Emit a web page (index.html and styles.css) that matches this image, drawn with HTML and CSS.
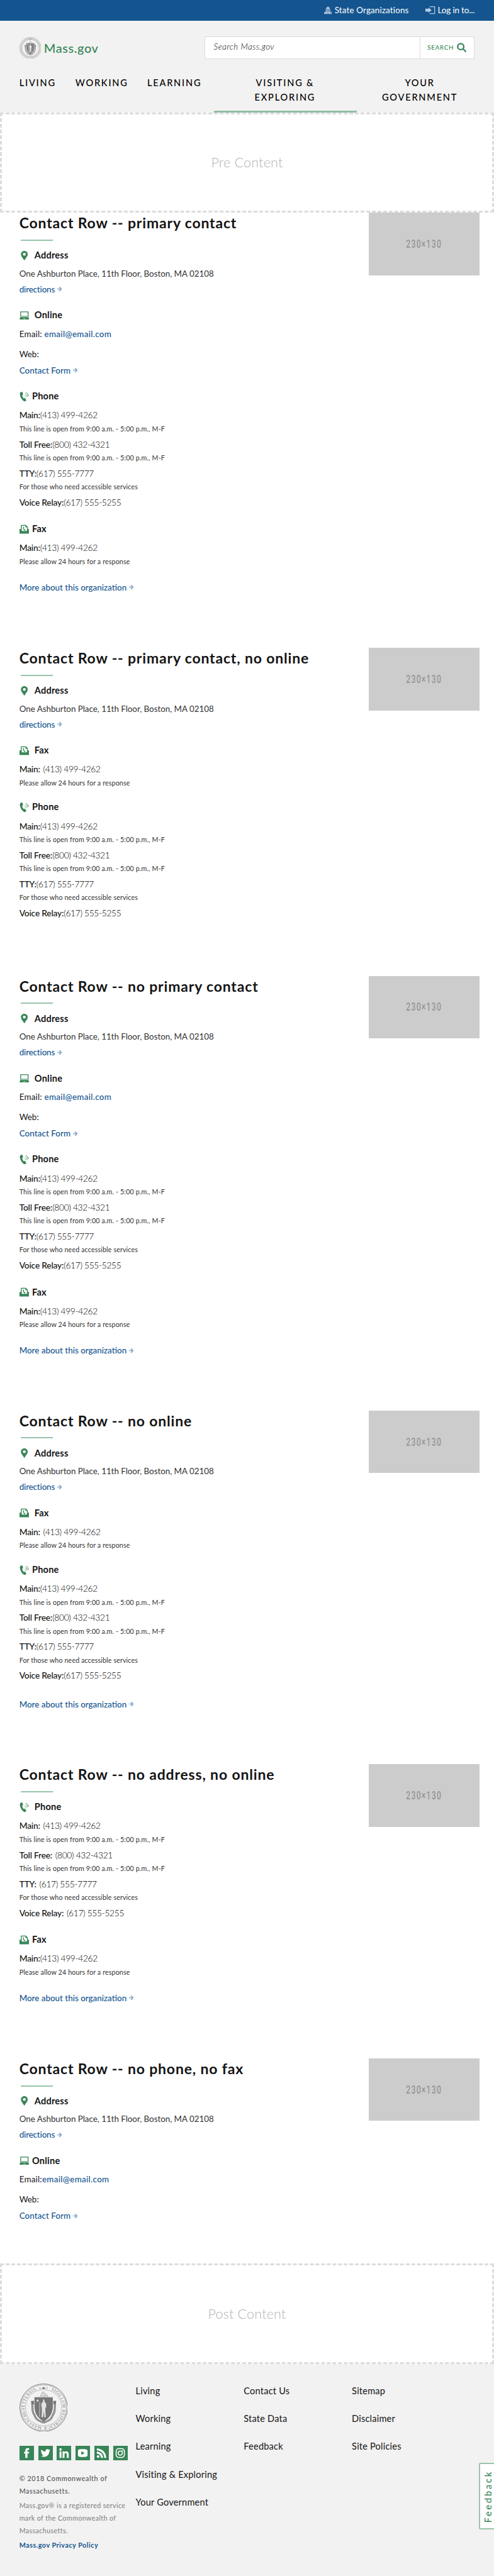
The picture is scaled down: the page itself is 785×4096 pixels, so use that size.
FILE: index.html
```html
<!DOCTYPE html>
<html lang="en">
<head>
<meta charset="utf-8">
<title>Mass.gov - Contact Rows</title>
<link rel="stylesheet" href="styles.css">
</head>
<body>
<svg class="sprite" aria-hidden="true">
  <symbol id="pin" viewBox="0 0 20 20"><path fill-rule="evenodd" d="M10 0C6 0 3 3 3 7c0 4 3.600 7.500 7 13 3.400-5.500 7-9 7-13 0-4-3-7-7-7zm0 3.900a3 3 0 1 1 0 6 3 3 0 0 1 0-6z"/></symbol>
  <symbol id="laptop" viewBox="0 0 20 20"><path fill-rule="evenodd" d="M1.500 1.600h17.200v10.900H1.500zM3.200 3.200v7.800h13.800V3.200z"/><path fill-rule="evenodd" d="M1.400 13.300h17.200l1.400 5H0zM8.400 16.300l-.4 1.100h4l-.4-1.100z"/></symbol>
  <symbol id="phone" viewBox="0 0 20 20"><path d="M2.700.7 5.600 0l2 5.200-2 1.500c.2 2.700 1.500 5.100 3.300 7l2.300-.9 3 4.600-1.900 2.300c-1.200.6-2.400.2-3.500-.5C4.700 16.300 1.400 11.200.8 5.200.7 3.300 1 1.500 2.700.7z"/><path class="wave" d="M11.100 8.800c1.300.1 2 .8 2.300 2M12.100 5.300c2.300.5 3.700 2.100 4 4.700M13.100 1.800c3.300 1.200 5.200 3.700 5.400 7.400"/></symbol>
  <symbol id="fax" viewBox="0 0 20 20"><path fill-rule="evenodd" d="M0 9.300h2.800V1h10.500l3.900 4v4.300H20V19H0zM4.600 2.700v10.700h10.800V6h-3.100V2.700z"/><path d="M7.600 4.800 9 4.400l.7 2.400-.8.800c.1 1 .6 1.800 1.300 2.500l1-.3 1.200 1.800-1 1C8.600 12.100 6.600 8.500 7.600 4.800z"/></symbol>
  <symbol id="arrow" viewBox="0 0 10 12"><path d="M0 5h5.700L3.300 2.600 5 .9 10 6l-5 5.100-1.700-1.700L5.700 7H0z"/></symbol>
  <symbol id="seal" viewBox="0 0 100 100">
    <circle class="seal-line" cx="50" cy="50" r="49.300" stroke-width="1.300"/>
    <circle class="seal-line" cx="50" cy="50" r="47" stroke-width=".6"/>
    <circle class="seal-line" cx="50" cy="50" r="37.500" stroke-width="1.100" stroke-dasharray=".8 .7"/>
    <path d="M41 8.500l5 1.200 4-3 4 3 5-1.200-2-1v3l-3-1-4 2.300-4-2.300-5 1z"/>
    <path class="seal-line" stroke-width="1" d="M43 27c2-4 4-8 6-10l3 3 5 4 2 3M45 26h12M48 20l5 5"/>
    <path class="ribbon" d="M26 38c2 8-1 16 3 24 3 3 2 7 7 12 5 5 9 5 14 7 5-2 9-2 14-7 5-5 4-9 7-12 4-8 1-16 3-24"/>
    <path class="ribbon-gap" d="M26 38c2 8-1 16 3 24 3 3 2 7 7 12 5 5 9 5 14 7 5-2 9-2 14-7 5-5 4-9 7-12 4-8 1-16 3-24"/>
    <path d="M24 36h6v7h-5zM70 36h6l-1 7h-5z"/>
    <path d="M31 28.500h38V48c0 15-8 24-19 31-11-7-19-16-19-31z"/>
    <path class="figure" d="M37.500 32l.9 2.200 2.300.1-1.800 1.500.6 2.300-2-1.300-2 1.300.6-2.300-1.800-1.500 2.300-.1zM49 32.500l2.500 1.500.5 4 3 3 .5 8-2 1.500v6l1 13-3 1-1-13-2 13-3-1 1-13-.5-8-1-5 2-4 1.500-2zM41.500 38.500l1 .2L42 69h-1z"/>
  </symbol>
</svg>

<header class="header">
  <div class="topbar">
    <a class="toplink"><svg class="topicon topicon--house" viewBox="0 0 16 16"><path d="M7.500 0h1v1.200C10.800 1.700 12 3.500 12 5.500H4c0-2 1.200-3.800 3.500-4.300zM3 6.200h10v1.300H3zM3.500 8h1.700v3H3.500zM6 8h1.600v3H6zM8.400 8H10v3H8.400zM10.800 8h1.700v3h-1.700zM.8 11.400h14.400V13H.8zM0 13h2v2H0zM3 13h2v2H3zM5.800 13h1.600v2H5.800zM8.600 13h1.600v2H8.600zM11 13h2v2h-2zM14 13h2v2h-2zM0 14.800h16V16H0z"/></svg>State Organizations</a>
    <a class="toplink toplink--login"><svg class="topicon topicon--login" viewBox="0 0 20 16"><path d="M0 5h6.500V2.600L13 8l-6.500 5.400V11H0zM9 0h11v16H9v-1.700h9.400V1.700H9z"/></svg>Log in to...</a>
  </div>
  <div class="brandbar">
    <a class="brand"><svg class="brand__seal" viewBox="0 0 100 100"><circle class="seal-dots" cx="50" cy="50" r="42.300"/><use href="#seal" width="100" height="100"/></svg><span>Mass.gov</span></a>
    <div class="search">
      <div class="search__field">Search Mass.gov</div>
      <div class="search__button"><span>SEARCH</span><svg viewBox="0 0 20 20"><circle cx="8" cy="8" r="6.300" fill="none" stroke="currentColor" stroke-width="3"/><path d="M12 13.800l1.900-1.900 6 5.700-2.200 2.300z"/></svg></div>
    </div>
  </div>
  <nav class="nav">
    <a>LIVING</a><a>WORKING</a><a>LEARNING</a><a class="nav__wide nav__wide--active">VISITING &amp;<br>EXPLORING</a><a class="nav__wide">YOUR<br>GOVERNMENT</a>
  </nav>
</header>

<div class="slot"><span>Pre Content</span></div>

<main>
<section class="row row--1">
  <div class="contact">
    <h2>Contact Row -- primary contact</h2>
    <h3><svg><use href="#pin"/></svg>Address</h3>
    <p class="address">One Ashburton Place, 11th Floor, Boston, MA 02108</p>
    <a class="link link--near">directions<svg><use href="#arrow"/></svg></a>
    <h3><svg><use href="#laptop"/></svg>Online</h3>
    <p class="online"><span>Email:</span> <a>email@email.com</a></p>
    <p class="web">Web:</p>
    <a class="link">Contact Form<svg><use href="#arrow"/></svg></a>
    <h3 class="tight"><svg><use href="#phone"/></svg>Phone</h3>
    <p class="line"><b>Main:</b><span>(413) 499-4262</span></p>
    <p class="note">This line is open from 9:00 a.m. - 5:00 p.m., M-F</p>
    <p class="line"><b>Toll Free:</b><span>(800) 432-4321</span></p>
    <p class="note">This line is open from 9:00 a.m. - 5:00 p.m., M-F</p>
    <p class="line"><b>TTY:</b><span>(617) 555-7777</span></p>
    <p class="note">For those who need accessible services</p>
    <p class="line"><b>Voice Relay:</b><span>(617) 555-5255</span></p>
    <h3 class="tight"><svg><use href="#fax"/></svg>Fax</h3>
    <p class="line"><b>Main:</b><span>(413) 499-4262</span></p>
    <p class="note">Please allow 24 hours for a response</p>
    <a class="link link--more">More about this organization<svg><use href="#arrow"/></svg></a>
  </div>
  <div class="thumb"><span>230×130</span></div>
</section>

<section class="row row--2">
  <div class="contact">
    <h2>Contact Row -- primary contact, no online</h2>
    <h3><svg><use href="#pin"/></svg>Address</h3>
    <p class="address">One Ashburton Place, 11th Floor, Boston, MA 02108</p>
    <a class="link link--near">directions<svg><use href="#arrow"/></svg></a>
    <h3><svg><use href="#fax"/></svg>Fax</h3>
    <p class="line line--gap"><b>Main:</b> <span>(413) 499-4262</span></p>
    <p class="note">Please allow 24 hours for a response</p>
    <h3 class="tight"><svg><use href="#phone"/></svg>Phone</h3>
    <p class="line"><b>Main:</b><span>(413) 499-4262</span></p>
    <p class="note">This line is open from 9:00 a.m. - 5:00 p.m., M-F</p>
    <p class="line"><b>Toll Free:</b><span>(800) 432-4321</span></p>
    <p class="note">This line is open from 9:00 a.m. - 5:00 p.m., M-F</p>
    <p class="line"><b>TTY:</b><span>(617) 555-7777</span></p>
    <p class="note">For those who need accessible services</p>
    <p class="line"><b>Voice Relay:</b><span>(617) 555-5255</span></p>
  </div>
  <div class="thumb"><span>230×130</span></div>
</section>

<section class="row row--3">
  <div class="contact">
    <h2>Contact Row -- no primary contact</h2>
    <h3><svg><use href="#pin"/></svg>Address</h3>
    <p class="address">One Ashburton Place, 11th Floor, Boston, MA 02108</p>
    <a class="link link--near">directions<svg><use href="#arrow"/></svg></a>
    <h3><svg><use href="#laptop"/></svg>Online</h3>
    <p class="online"><span>Email:</span> <a>email@email.com</a></p>
    <p class="web">Web:</p>
    <a class="link">Contact Form<svg><use href="#arrow"/></svg></a>
    <h3 class="tight"><svg><use href="#phone"/></svg>Phone</h3>
    <p class="line"><b>Main:</b><span>(413) 499-4262</span></p>
    <p class="note">This line is open from 9:00 a.m. - 5:00 p.m., M-F</p>
    <p class="line"><b>Toll Free:</b><span>(800) 432-4321</span></p>
    <p class="note">This line is open from 9:00 a.m. - 5:00 p.m., M-F</p>
    <p class="line"><b>TTY:</b><span>(617) 555-7777</span></p>
    <p class="note">For those who need accessible services</p>
    <p class="line"><b>Voice Relay:</b><span>(617) 555-5255</span></p>
    <h3 class="tight"><svg><use href="#fax"/></svg>Fax</h3>
    <p class="line"><b>Main:</b><span>(413) 499-4262</span></p>
    <p class="note">Please allow 24 hours for a response</p>
    <a class="link link--more">More about this organization<svg><use href="#arrow"/></svg></a>
  </div>
  <div class="thumb"><span>230×130</span></div>
</section>

<section class="row row--4">
  <div class="contact">
    <h2>Contact Row -- no online</h2>
    <h3><svg><use href="#pin"/></svg>Address</h3>
    <p class="address">One Ashburton Place, 11th Floor, Boston, MA 02108</p>
    <a class="link link--near">directions<svg><use href="#arrow"/></svg></a>
    <h3><svg><use href="#fax"/></svg>Fax</h3>
    <p class="line line--gap"><b>Main:</b> <span>(413) 499-4262</span></p>
    <p class="note">Please allow 24 hours for a response</p>
    <h3 class="tight"><svg><use href="#phone"/></svg>Phone</h3>
    <p class="line"><b>Main:</b><span>(413) 499-4262</span></p>
    <p class="note">This line is open from 9:00 a.m. - 5:00 p.m., M-F</p>
    <p class="line"><b>Toll Free:</b><span>(800) 432-4321</span></p>
    <p class="note">This line is open from 9:00 a.m. - 5:00 p.m., M-F</p>
    <p class="line"><b>TTY:</b><span>(617) 555-7777</span></p>
    <p class="note">For those who need accessible services</p>
    <p class="line"><b>Voice Relay:</b><span>(617) 555-5255</span></p>
    <a class="link link--far">More about this organization<svg><use href="#arrow"/></svg></a>
  </div>
  <div class="thumb"><span>230×130</span></div>
</section>

<section class="row row--5">
  <div class="contact">
    <h2>Contact Row -- no address, no online</h2>
    <h3><svg><use href="#phone"/></svg>Phone</h3>
    <p class="line line--gap"><b>Main:</b> <span>(413) 499-4262</span></p>
    <p class="note">This line is open from 9:00 a.m. - 5:00 p.m., M-F</p>
    <p class="line line--gap"><b>Toll Free:</b> <span>(800) 432-4321</span></p>
    <p class="note">This line is open from 9:00 a.m. - 5:00 p.m., M-F</p>
    <p class="line line--gap"><b>TTY:</b> <span>(617) 555-7777</span></p>
    <p class="note">For those who need accessible services</p>
    <p class="line line--gap"><b>Voice Relay:</b> <span>(617) 555-5255</span></p>
    <h3 class="tight"><svg><use href="#fax"/></svg>Fax</h3>
    <p class="line"><b>Main:</b><span>(413) 499-4262</span></p>
    <p class="note">Please allow 24 hours for a response</p>
    <a class="link link--more">More about this organization<svg><use href="#arrow"/></svg></a>
  </div>
  <div class="thumb"><span>230×130</span></div>
</section>

<section class="row row--6">
  <div class="contact">
    <h2>Contact Row -- no phone, no fax</h2>
    <h3><svg><use href="#pin"/></svg>Address</h3>
    <p class="address">One Ashburton Place, 11th Floor, Boston, MA 02108</p>
    <a class="link link--near">directions<svg><use href="#arrow"/></svg></a>
    <h3 class="tight"><svg><use href="#laptop"/></svg>Online</h3>
    <p class="online"><span>Email:</span><a>email@email.com</a></p>
    <p class="web">Web:</p>
    <a class="link">Contact Form<svg><use href="#arrow"/></svg></a>
  </div>
  <div class="thumb"><span>230×130</span></div>
</section>
</main>

<div class="slot"><span>Post Content</span></div>

<footer class="footer">
  <div class="about">
    <svg class="about__seal" viewBox="0 0 100 100"><use href="#seal" width="100" height="100"/><path id="ring" fill="none" d="M50 10.500a39.500 39.500 0 1 1-.01 0"/><text class="seal-text"><textPath href="#ring" startOffset="16" textLength="218">SIGILLUM REIPUBLICÆ MASSACHUSETTENSIS.</textPath></text></svg>
    <div class="social">
      <svg viewBox="0 0 30 30"><path d="M12 25v-9H9.500v-3.600H12V10c0-3.300 1.600-5 4.800-5H20v3.500h-1.900c-1.200 0-1.600.6-1.600 1.700v2.200H20l-.5 3.600h-3v9z"/></svg>
      <svg viewBox="0 0 30 30"><path d="M5 21.300c2.300.2 4.200-.4 5.800-1.600-1.900-.1-3.200-1.200-3.700-2.800h1.700C6.700 16.300 5.600 14.800 5.600 12.700c.6.300 1.100.5 1.700.5C5.500 11.800 5 9.700 6.200 7.700c2.300 2.700 5 4.100 8.400 4.300C14 9.300 15.800 7 18.600 7c1.200 0 2.200.5 3 1.300.9-.2 1.800-.5 2.600-1-.3.900-.9 1.700-1.700 2.200l2.300-.6c-.5.800-1.200 1.500-2 2.100.2 6-4.300 11.800-11.300 11.900-2.400 0-4.600-.6-6.500-1.600z"/></svg>
      <svg viewBox="0 0 30 30"><circle cx="8" cy="7.500" r="2.500"/><path d="M6 11.500h4V25H6zM12.300 11.500h3.800v1.900c2-3.300 8.900-3 8.900 3.400V25h-4v-7.300c0-3.900-4.700-3.600-4.700 0V25h-4z"/></svg>
      <svg viewBox="0 0 30 30"><path fill-rule="evenodd" d="M9 7.200c4-.5 8-.5 12 0 2.600.2 4 1.500 4 4v7.600c0 2.500-1.400 3.800-4 4-4 .5-8 .5-12 0-2.600-.2-4-1.500-4-4v-7.600c0-2.500 1.400-3.800 4-4zM12 11v8l7-4z"/></svg>
      <svg viewBox="0 0 30 30"><circle cx="7.700" cy="22.300" r="2.700"/><path d="M5 5.500C16 5.500 24.500 14 24.500 25h-4C20.500 16.300 13.700 9.500 5 9.500zM5 12.200c7.200 0 12.800 5.600 12.800 12.800h-4c0-5-3.800-8.800-8.800-8.800z"/></svg>
      <svg viewBox="0 0 30 30"><rect class="stroke" x="6" y="6" width="17" height="18" rx="5"/><circle class="stroke" cx="14.500" cy="15" r="4.300"/><circle cx="19.500" cy="10" r="1.200"/></svg>
    </div>
    <p class="copy copy--strong">© 2018 Commonwealth of<br>Massachusetts.</p>
    <p class="copy">Mass.gov® is a registered service<br>mark of the Commonwealth of<br>Massachusetts.</p>
    <a class="copy copy--link">Mass.gov Privacy Policy</a>
  </div>
  <ul class="links"><li>Living</li><li>Working</li><li>Learning</li><li>Visiting &amp; Exploring</li><li>Your Government</li></ul>
  <ul class="links"><li>Contact Us</li><li>State Data</li><li>Feedback</li></ul>
  <ul class="links"><li>Sitemap</li><li>Disclaimer</li><li>Site Policies</li></ul>
  <div class="feedback"><span>Feedback</span></div>
</footer>
</body>
</html>
```

FILE: styles.css
```css
/* 1rem = 10 layout units */
html { font-size: 7.67px; }
* { box-sizing: border-box; margin: 0; padding: 0; }
body { font-family: Lato, "Open Sans", sans-serif; color: #141414; background: #fff; overflow-x: hidden; }
.sprite { position: absolute; width: 0; height: 0; overflow: hidden; }
svg { display: block; fill: currentColor; flex: none; }
ul { list-style: none; }

.header { height: 23.3rem; background: #f2f2f2; }
.topbar { height: 4.3rem; background: #14558f; color: #fff; display: flex; justify-content: flex-end; align-items: center; padding-right: 4rem; font-size: 1.75rem; letter-spacing: .012em; }
.toplink { display: flex; align-items: center; }
.toplink--login { margin-left: 3.5rem; letter-spacing: -.01em; }
.topicon { color: #b9cbdf; height: 1.6rem; }
.topicon--house { width: 1.6rem; margin-right: .6rem; }
.topicon--login { width: 2rem; margin-right: .5rem; }

.brandbar { height: 11.3rem; padding: 3.3rem 4rem 0; display: flex; justify-content: space-between; align-items: flex-start; }
.brand { display: flex; align-items: center; height: 4.6rem; gap: .6rem; color: #388557; font-size: 2.6rem; font-weight: 500; letter-spacing: .03em; }
.brand__seal { width: 4.5rem; height: 4.5rem; color: #858585; }
.seal-dots { fill: none; stroke: #b5b5b5; stroke-width: 6; stroke-dasharray: 3.5 2; }
.search { width: 56rem; height: 4.6rem; border: .2rem solid #dcdcdc; background: #fff; display: flex; }
.search__field { flex: 1; padding-left: 1.8rem; line-height: 4.1rem; font-size: 1.75rem; font-style: italic; font-weight: 300; letter-spacing: .03em; color: #000; }
.search__button { width: 11.2rem; border-left: .2rem solid #dcdcdc; display: flex; align-items: center; padding-left: 1.4rem; color: #388557; font-size: 1.25rem; font-weight: 500; letter-spacing: .09em; }
.search__button svg { width: 2rem; height: 2rem; margin-left: .6rem; }

.nav { height: 7.7rem; padding-left: 4rem; display: grid; grid-template-columns: 11.6rem 14.9rem 13.7rem 29.7rem 1fr; font-size: 1.9rem; font-weight: 500; line-height: 3.1rem; letter-spacing: .123em; color: #000; }
.nav__wide { text-align: center; }
.nav__wide:last-child { margin: 0 4rem 0 1.7rem; }
.nav__wide--active { position: relative; }
.nav__wide--active::after { content: ""; position: absolute; left: .1rem; right: 0; bottom: 0; height: .35rem; background: #92bfa4; transform: skewX(-30deg); }

.slot { height: 20.8rem; border: .4rem dashed #dcdcdc; display: flex; align-items: center; justify-content: center; color: #b4b4b4; font-size: 2.8rem; font-weight: 300; letter-spacing: .01em; }

.row { display: flex; justify-content: space-between; padding: 0 3rem 0 4rem; }
.row--1 { height: 90.2rem; }
.row--2 { height: 68rem; }
.row--3 { height: 90.1rem; }
.row--4 { height: 73.3rem; }
.row--5 { height: 61rem; }
.row--6 { height: 42.6rem; }
.thumb { width: 23rem; height: 13rem; background: #ccc; color: #969696; display: flex; align-items: center; justify-content: center; font: 500 2.45rem Roboto, sans-serif; letter-spacing: .25rem; }
.thumb span { transform: scaleX(.65); }

.contact { padding-top: .14rem; }
.contact h2 { font-size: 3rem; line-height: 4.14rem; font-weight: 700; letter-spacing: .036em; white-space: nowrap; }
.contact h2::after { content: ""; display: block; width: 6.7rem; height: .32rem; margin: 1.3rem 0 .08rem .25rem; background: #98c4ab; transform: skewX(-35deg); }
.contact h3 { margin-top: 3rem; height: 2.4rem; line-height: 2.4rem; font-size: 1.9rem; font-weight: 700; letter-spacing: .014em; display: flex; align-items: center; }
.contact h2 + h3 { margin-top: 1.82rem; }
.contact h3 svg { width: 2rem; height: 2rem; margin-right: 1.15rem; color: #388557; }
.contact h3.tight svg { margin-right: .65rem; }
.wave { fill: none; stroke: currentColor; stroke-width: 1.3; }
.address, .online, .web { font-size: 1.75rem; line-height: 2.4rem; }
.address { margin-top: 1.31rem; font-weight: 400; color: #333; letter-spacing: -.003em; }
.online { margin-top: 1.47rem; letter-spacing: .016em; }
.online a { color: #14558f; font-weight: 500; letter-spacing: .022em; }
.web { margin-top: 1.73rem; }
.link { display: flex; align-items: center; margin-top: 1rem; line-height: 2.4rem; font-size: 1.75rem; font-weight: 500; letter-spacing: .005em; color: #14558f; }
.link svg { width: 1rem; height: 1.2rem; margin-left: .5rem; color: #8aabcc; }
.link--near { margin-top: .86rem; letter-spacing: -.012em; }
.link--more { margin-top: 3.17rem; letter-spacing: 0; }
.link--far { margin-top: 3.48rem; letter-spacing: 0; }
.line { margin-top: 1.1rem; font-size: 1.8rem; line-height: 2.4rem; }
.line b { font-weight: 500; letter-spacing: -.015em; }
.line span { font-weight: 300; letter-spacing: -.025em; color: #000; }
.line--gap b { margin-right: .15rem; }
h3 + .line { margin-top: 1.53rem; }
.note { margin-top: .5rem; font-size: 1.4rem; line-height: 2rem; font-weight: 400; color: #333; letter-spacing: .0118em; }
h3 + .line + .note { margin-top: .54rem; }
.line + h3 { margin-top: 3.16rem; }
.note + h3 { margin-top: 2.9rem; }

.footer { position: relative; height: 43.92rem; background: #f2f2f2; display: grid; grid-template-columns: 24.1rem 22.4rem 22.4rem 1fr; padding: 4rem 0 0 4rem; overflow: hidden; }
.about__seal { width: 10rem; height: 10rem; color: #777; }
.seal-line { fill: none; stroke: currentColor; }
.seal-text { font: 8.5px "Liberation Serif", serif; }
.ribbon { fill: none; stroke: currentColor; stroke-width: 4; }
.ribbon-gap { fill: none; stroke: #d0d0d0; stroke-width: 1.6; stroke-dasharray: 1 1; }
.figure { fill: #e4e4e4; }
.social { display: flex; gap: .9rem; margin-top: 3rem; }
.social svg { width: 3rem; height: 3rem; background: #388557; color: #fff; }
.stroke { fill: none; stroke: currentColor; stroke-width: 2; }
.copy { display: block; margin-top: .4rem; font-size: 1.4rem; line-height: 2.6rem; letter-spacing: .035em; color: #7c7c7c; font-weight: 400; white-space: nowrap; }
.copy--strong { margin-top: 2.47rem; color: #535353; font-weight: 500; letter-spacing: .0565em; }
.copy--link { color: #14558f; font-weight: 700; letter-spacing: .05em; }
.links { padding-top: .4rem; font-size: 1.9rem; letter-spacing: .014em; line-height: 2.4rem; }
.links li { margin-bottom: 3.38rem; white-space: nowrap; }
.feedback { position: absolute; right: -.3rem; top: 20.5rem; width: 3.4rem; height: 13.8rem; border: .3rem solid #9ac4ab; border-radius: .3rem; background: #fff; color: #388557; display: flex; align-items: center; justify-content: center; font-size: 1.9rem; line-height: 2.4rem; font-weight: 500; letter-spacing: .19em; }
.feedback span { writing-mode: vertical-rl; transform: rotate(180deg) translateX(-.2rem); }
```
